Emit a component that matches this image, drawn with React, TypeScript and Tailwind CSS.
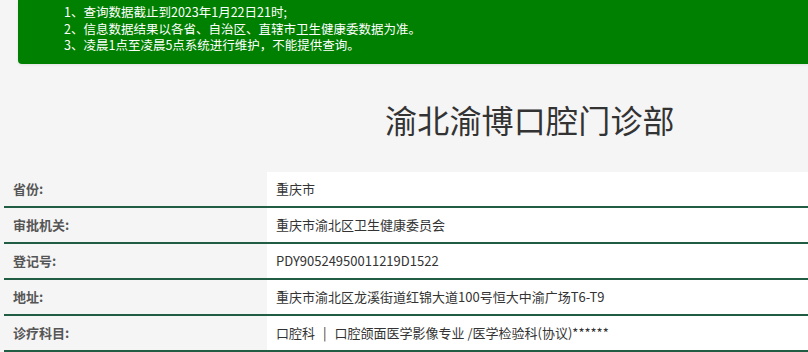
import React from "react";

const rows: [string, React.ReactNode][] = [
  ["省份:", "重庆市"],
  ["审批机关:", "重庆市渝北区卫生健康委员会"],
  ["登记号:", "PDY90524950011219D1522"],
  ["地址:", "重庆市渝北区龙溪街道红锦大道100号恒大中渝广场T6-T9"],
  [
    "诊疗科目:",
    <>
      <span>口腔科</span>
      <span className="px-[8px]">|</span>
      <span>口腔颌面医学影像专业 /医学检验科(协议)******</span>
    </>,
  ],
];

export default function App() {
  return (
    <div
      className="w-[808px] h-[352px] overflow-hidden bg-[#f5f5f5]"
      style={{ fontFamily: '"Microsoft YaHei", "Noto Sans CJK SC", "Noto Sans", sans-serif' }}
    >
      <div className="ml-[18px] h-[64px] bg-[#008000] rounded-bl-[4px] pl-[46px] pt-[4px] text-white text-[12.5px] leading-[16.5px] shadow-[0_1px_3px_rgba(0,0,0,0.08)]">
        <div>1、查询数据截止到2023年1月22日21时;</div>
        <div>2、信息数据结果以各省、自治区、直辖市卫生健康委数据为准。</div>
        <div>3、凌晨1点至凌晨5点系统进行维护，不能提供查询。</div>
      </div>
      <div className="h-[108px] pl-[385px] pt-[33px]">
        <div className="text-[32px] leading-[44px] text-[#333] tracking-[0.2px]">渝北渝博口腔门诊部</div>
      </div>
      <div className="ml-[4px]">
        {rows.map(([k, v]) => (
          <div key={k} className="flex h-[36px] border-b-2 border-[#215c45]">
            <div className="w-[263px] pl-[9px] flex items-center text-[13px] font-bold text-[#555]">{k}</div>
            <div className="flex-1 bg-white pl-[9px] flex items-center text-[13px] text-[#333]">{v}</div>
          </div>
        ))}
      </div>
    </div>
  );
}
